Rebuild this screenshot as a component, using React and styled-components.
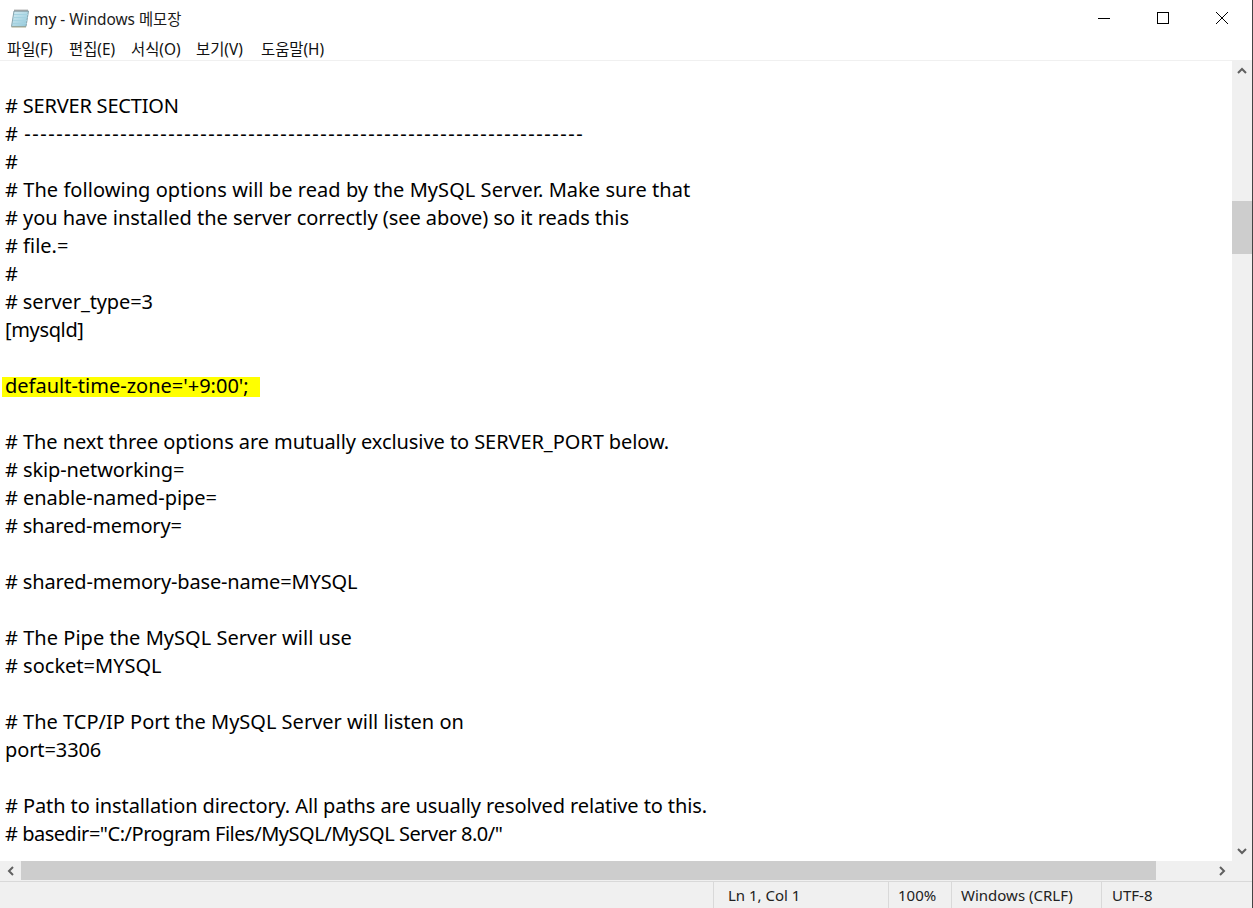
import React from 'react';
import styled, { createGlobalStyle } from 'styled-components';

const FONT = `"Noto Sans", "Noto Sans CJK KR", sans-serif`;

// track: small letter-spacing so each line ends where the original font ended it
const LINES = [
  { text: '' },
  { text: '# SERVER SECTION', track: -0.2 },
  { text: '# ----------------------------------------------------------------------', track: 1.56, word: -2 },
  { text: '#' },
  { text: '# The following options will be read by the MySQL Server. Make sure that', track: 0.055 },
  { text: '# you have installed the server correctly (see above) so it reads this', track: -0.04 },
  { text: '# file.=' },
  { text: '#' },
  { text: '# server_type=3', track: -0.13 },
  { text: '[mysqld]', track: -0.35 },
  { text: '' },
  { text: "default-time-zone='+9:00';", mark: true },
  { text: '' },
  { text: '# The next three options are mutually exclusive to SERVER_PORT below.', track: -0.07 },
  { text: '# skip-networking=', track: -0.1 },
  { text: '# enable-named-pipe=', track: -0.05 },
  { text: '# shared-memory=', track: -0.2 },
  { text: '' },
  { text: '# shared-memory-base-name=MYSQL', track: -0.16 },
  { text: '' },
  { text: '# The Pipe the MySQL Server will use', track: 0.03 },
  { text: '# socket=MYSQL' },
  { text: '' },
  { text: '# The TCP/IP Port the MySQL Server will listen on' },
  { text: 'port=3306', track: -0.1 },
  { text: '' },
  { text: '# Path to installation directory. All paths are usually resolved relative to this.', track: -0.1 },
  { text: '# basedir="C:/Program Files/MySQL/MySQL Server 8.0/"', track: -0.48 },
];

const MENUS = [
  { label: '파일(F)', width: 62 },
  { label: '편집(E)', width: 62 },
  { label: '서식(O)', width: 65 },
  { label: '보기(V)', width: 65 },
  { label: '도움말(H)', width: 80 },
];

const NotepadIcon = () => (
  <svg width="20" height="20" viewBox="0 0 20 20">
    <defs>
      <linearGradient id="pad" x1="0" y1="0" x2="1" y2="1">
        <stop offset="0" stopColor="#d6edf4" />
        <stop offset="1" stopColor="#8fc6d8" />
      </linearGradient>
    </defs>
    <path d="M4 3h14.5L16 18.5H1.5z" fill="url(#pad)" stroke="#86a3ad" strokeWidth="1" />
    <path d="M4 6.5h14M3.6 9.5h14M3.2 12.5h14M2.8 15.5h14" stroke="#a4d2e0" strokeWidth="1" />
    <path d="M4.5 2.5h13" stroke="#777" strokeWidth="2" strokeDasharray="1 1" />
    <path d="M1.5 19h14.5" stroke="#a8a98c" strokeWidth="1" />
  </svg>
);

const Arrow = ({ d }) => (
  <svg width="10" height="10" viewBox="0 0 10 10">
    <path d={d} fill="none" stroke="#606060" strokeWidth="2" />
  </svg>
);

const App = () => {
  return (
    <>
      <GlobalStyle />
      <Window>
        <TitleBar>
          <TitleLeft>
            <NotepadIcon />
            <Title>my - Windows 메모장</Title>
          </TitleLeft>
          <WindowButtons>
            <WindowButton>
              <svg width="12" height="12" viewBox="0 0 12 12">
                <path d="M0 6.5h12" stroke="#000" strokeWidth="1" />
              </svg>
            </WindowButton>
            <WindowButton>
              <svg width="12" height="12" viewBox="0 0 12 12">
                <rect x="0.5" y="0.5" width="11" height="11" fill="none" stroke="#000" strokeWidth="1" />
              </svg>
            </WindowButton>
            <WindowButton>
              <svg width="12" height="12" viewBox="0 0 12 12">
                <path d="M0 0l12 12M12 0L0 12" stroke="#000" strokeWidth="1" />
              </svg>
            </WindowButton>
          </WindowButtons>
        </TitleBar>
        <MenuBar>
          {MENUS.map((m) => (
            <MenuItem key={m.label} $width={m.width}>{m.label}</MenuItem>
          ))}
        </MenuBar>
        <EditorRow>
          <TextArea>
            {LINES.map((line, i) => (
              <Line key={i} $track={line.track} $word={line.word}>
                {line.mark ? <Mark>{line.text}</Mark> : line.text}
              </Line>
            ))}
          </TextArea>
          <VScroll>
            <ArrowCell>
              <Arrow d="M1 7l4-4 4 4" />
            </ArrowCell>
            <VTrack>
              <VThumb />
            </VTrack>
            <ArrowCell>
              <Arrow d="M1 3l4 4 4-4" />
            </ArrowCell>
          </VScroll>
        </EditorRow>
        <HScrollRow>
          <HArrowCell>
            <Arrow d="M7 1L3 5l4 4" />
          </HArrowCell>
          <HTrack>
            <HThumb />
          </HTrack>
          <HArrowCell>
            <Arrow d="M3 1l4 4-4 4" />
          </HArrowCell>
          <Corner />
        </HScrollRow>
        <StatusBar>
          <StatusCell $width={175}>Ln 1, Col 1</StatusCell>
          <StatusCell $width={63} $pad={9}>100%</StatusCell>
          <StatusCell $width={150} $pad={9}>Windows (CRLF)</StatusCell>
          <StatusCell $width={151} $pad={10}>UTF-8</StatusCell>
          <Grip>
            <svg width="12" height="11" viewBox="0 0 12 11" fill="#c0c0c0">
              <rect x="8" y="0" width="3" height="3" />
              <rect x="4" y="4" width="3" height="3" />
              <rect x="8" y="4" width="3" height="3" />
              <rect x="0" y="8" width="3" height="3" />
              <rect x="4" y="8" width="3" height="3" />
              <rect x="8" y="8" width="3" height="3" />
            </svg>
          </Grip>
        </StatusBar>
      </Window>
    </>
  );
};

const GlobalStyle = createGlobalStyle`
  html, body {
    margin: 0;
    padding: 0;
    background: #fff;
  }
`;

const Window = styled.div`
  width: 1253px;
  height: 908px;
  box-sizing: border-box;
  display: flex;
  flex-direction: column;
  border-right: 1px solid #444;
  overflow: hidden;
  font-family: ${FONT};
  color: #000;
  background: #fff;
`;

const TitleBar = styled.div`
  height: 36px;
  flex: none;
  display: flex;
  align-items: center;
  justify-content: space-between;
`;

const TitleLeft = styled.div`
  display: flex;
  align-items: center;
  gap: 4px;
  padding-left: 10px;
`;

const Title = styled.span`
  font-size: 15.4px;
  color: #1a1a1a;
`;

const WindowButtons = styled.div`
  display: flex;
  padding-right: 1px;
`;

const WindowButton = styled.div`
  width: 59px;
  height: 36px;
  display: flex;
  align-items: center;
  justify-content: center;
`;

const MenuBar = styled.div`
  height: 24px;
  flex: none;
  display: flex;
  align-items: center;
  padding-left: 7px;
  border-bottom: 1px solid #f0f0f0;
`;

const MenuItem = styled.div`
  width: ${(p) => p.$width}px;
  font-size: 15.4px;
  white-space: nowrap;
  color: #111;
`;

const EditorRow = styled.div`
  flex: none;
  height: 800px;
  display: flex;
`;

const TextArea = styled.div`
  flex: 1;
  min-width: 0;
  padding: 3px 0 0 5px;
  overflow: hidden;
`;

const Line = styled.div`
  height: 28px;
  line-height: 28px;
  font-size: 20px;
  white-space: pre;
  letter-spacing: ${(p) => p.$track || 0}px;
  word-spacing: ${(p) => p.$word || 0}px;
`;

const Mark = styled.span`
  display: inline-block;
  height: 20px;
  line-height: 18px;
  margin: 5px 0 0 -3px;
  padding: 0 11px 0 3px;
  background: #ffff00;
  vertical-align: top;
`;

const VScroll = styled.div`
  width: 20px;
  flex: none;
  display: flex;
  flex-direction: column;
  background: #f0f0f0;
`;

const ArrowCell = styled.div`
  height: 20px;
  flex: none;
  display: flex;
  align-items: center;
  justify-content: center;
`;

const VTrack = styled.div`
  flex: 1;
  padding-top: 120px;
`;

const VThumb = styled.div`
  height: 53px;
  background: #cdcdcd;
`;

const HScrollRow = styled.div`
  height: 20px;
  flex: none;
  display: flex;
  background: #f0f0f0;
`;

const HArrowCell = styled(ArrowCell)`
  width: 21px;
`;

const HTrack = styled.div`
  flex: 1;
  padding-right: 55px;
`;

const HThumb = styled.div`
  height: 19px;
  background: #cdcdcd;
`;

const Corner = styled.div`
  width: 20px;
  flex: none;
`;

const StatusBar = styled.div`
  flex: 1;
  display: flex;
  justify-content: flex-end;
  background: #f0f0f0;
  border-top: 1px solid #d9d9d9;
`;

const StatusCell = styled.div`
  width: ${(p) => p.$width}px;
  box-sizing: border-box;
  padding-left: ${(p) => p.$pad || 14}px;
  border-left: 1px solid #d9d9d9;
  font-size: 15px;
  line-height: 27px;
  color: #222;
  white-space: nowrap;
`;

const Grip = styled.div`
  display: flex;
  align-items: flex-end;
  width: 0;
  justify-content: flex-end;
`;

export default App;
